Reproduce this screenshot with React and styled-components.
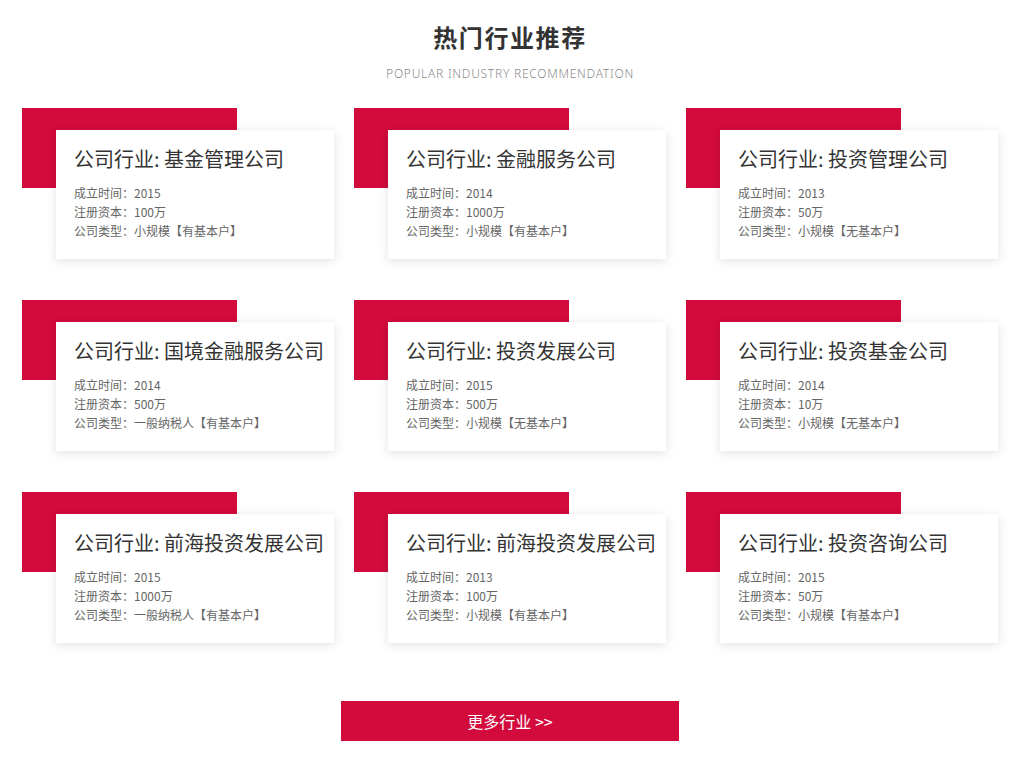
import React from 'react';
import styled, { createGlobalStyle } from 'styled-components';

const GlobalStyle = createGlobalStyle`
  body {
    margin: 0;
    background: #fff;
    font-family: 'Noto Sans CJK SC', 'Noto Sans', sans-serif;
  }
`;

const companies = [
  { name: '基金管理公司', year: 2015, capital: '100万', type: '小规模【有基本户】' },
  { name: '金融服务公司', year: 2014, capital: '1000万', type: '小规模【有基本户】' },
  { name: '投资管理公司', year: 2013, capital: '50万', type: '小规模【无基本户】' },
  { name: '国境金融服务公司', year: 2014, capital: '500万', type: '一般纳税人【有基本户】' },
  { name: '投资发展公司', year: 2015, capital: '500万', type: '小规模【无基本户】' },
  { name: '投资基金公司', year: 2014, capital: '10万', type: '小规模【无基本户】' },
  { name: '前海投资发展公司', year: 2015, capital: '1000万', type: '一般纳税人【有基本户】' },
  { name: '前海投资发展公司', year: 2013, capital: '100万', type: '小规模【有基本户】' },
  { name: '投资咨询公司', year: 2015, capital: '50万', type: '小规模【有基本户】' },
];

const App = () => {
  return (
    <Section>
      <GlobalStyle />
      <Heading>热门行业推荐</Heading>
      <SubHeading>POPULAR INDUSTRY RECOMMENDATION</SubHeading>
      <Grid>
        {companies.map((c, i) => (
          <Item key={i}>
            <Accent />
            <Card>
              <CardTitle>公司行业: {c.name}</CardTitle>
              <Info>
                <li>成立时间：{c.year}</li>
                <li>注册资本：{c.capital}</li>
                <li>公司类型：{c.type}</li>
              </Info>
            </Card>
          </Item>
        ))}
      </Grid>
      <MoreButton type='button'>更多行业 &gt;&gt;</MoreButton>
    </Section>
  );
};

const Section = styled.section`
  display: flex;
  flex-direction: column;
  align-items: center;
  padding-top: 21px;
`;

const Heading = styled.h2`
  margin: 0;
  font-size: 24px;
  line-height: 32px;
  font-weight: 700;
  color: #333;
  letter-spacing: 1.6px;
`;

const SubHeading = styled.p`
  margin: 13px 0 0;
  font-family: 'Noto Sans', 'Open Sans', sans-serif;
  font-weight: 300;
  font-size: 12px;
  line-height: 16px;
  color: #8a8a8a;
  letter-spacing: 0.75px;
`;

const Grid = styled.div`
  display: grid;
  grid-template-columns: repeat(3, 312px);
  column-gap: 20px;
  row-gap: 41px;
  margin-top: 26px;
`;

const Item = styled.div`
  display: grid;
  grid-template-columns: 34px 181px 97px;
  grid-template-rows: 22px 58px 71px;
`;

const Accent = styled.div`
  grid-column: 1 / 3;
  grid-row: 1 / 3;
  background: #d20b3c;
`;

const Card = styled.div`
  grid-column: 2 / 4;
  grid-row: 2 / 4;
  z-index: 1;
  background: #fff;
  box-shadow: 0 2px 10px rgba(0, 0, 0, 0.12);
  padding: 15px 0 0 18px;
`;

const CardTitle = styled.h3`
  margin: 0;
  font-size: 20px;
  line-height: 28px;
  font-weight: 400;
  color: #333;
  white-space: nowrap;
`;

const Info = styled.ul`
  list-style: none;
  margin: 10px 0 0;
  padding: 0;
  font-size: 12px;
  line-height: 19px;
  color: #666;
`;

const MoreButton = styled.button`
  margin-top: 58px;
  width: 338px;
  height: 40px;
  border: none;
  background: #d20b3c;
  color: #fff;
  font-family: inherit;
  font-size: 16px;
  cursor: pointer;
`;

export default App;
